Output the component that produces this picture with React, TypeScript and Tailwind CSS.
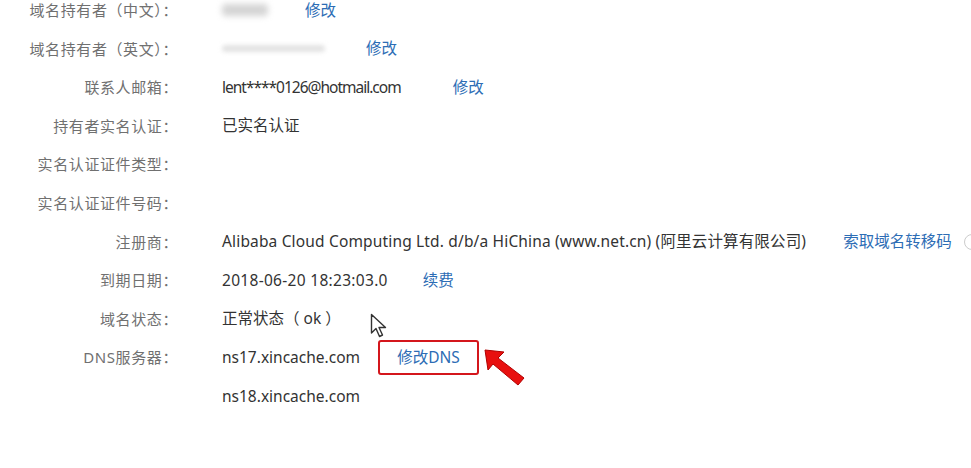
import React from "react"

const font = { fontFamily: '"Noto Sans", "Noto Sans CJK SC", sans-serif' }

function Link({ children, className = "" }: { children: React.ReactNode; className?: string }) {
  return <span className={`text-[#2d6db5] ${className}`}>{children}</span>
}

function Row({ label, children }: { label: string; children?: React.ReactNode }) {
  return (
    <div className="flex h-[38.6px] items-center">
      <div className="w-[180px] shrink-0 pr-[2px] text-right text-[15px] tracking-[0.6px] text-[#707070]">{label}</div>
      <div className="ml-[42px] flex items-center whitespace-nowrap text-[15.5px] text-[#333]">{children}</div>
    </div>
  )
}

export default function App() {
  return (
    <div className="relative h-[468px] w-[971px] overflow-hidden bg-white" style={font}>
      <div className="mt-[-9px] flex flex-col">
        <Row label="域名持有者（中文）：">
          <span className="h-[12px] w-[46px] rounded-sm bg-[#d4d4d4] blur-[3px]" />
          <Link className="ml-[37px]">修改</Link>
        </Row>
        <Row label="域名持有者（英文）：">
          <span className="h-[7px] w-[103px] rounded-sm bg-[#e3e3e3] blur-[2px]" />
          <Link className="ml-[41px]">修改</Link>
        </Row>
        <Row label="联系人邮箱：">
          <span className="tracking-[-1px]">lent****0126@hotmail.com</span>
          <Link className="ml-[52px]">修改</Link>
        </Row>
        <Row label="持有者实名认证：">
          <span>已实名认证</span>
        </Row>
        <Row label="实名认证证件类型：" />
        <Row label="实名认证证件号码：" />
        <Row label="注册商：">
          <span className="tracking-[0.16px]">Alibaba Cloud Computing Ltd. d/b/a HiChina (www.net.cn) (阿里云计算有限公司)</span>
          <Link className="ml-[37px]">索取域名转移码</Link>
          <span className="ml-[12px] h-[16px] w-[16px] shrink-0 rounded-full border border-[#ccc]" />
        </Row>
        <Row label="到期日期：">
          <span className="tracking-[0.3px]">2018-06-20 18:23:03.0</span>
          <Link className="ml-[35px]">续费</Link>
        </Row>
        <Row label="域名状态：">
          <span>正常状态（ ok ）</span>
        </Row>
        <Row label="DNS服务器：">
          <span>ns17.xincache.com</span>
          <span className="ml-[18px] flex h-[35px] w-[101px] items-center justify-center rounded-[3px] border-2 border-[#d4161c]">
            <Link>修改DNS</Link>
          </span>
        </Row>
        <Row label="">
          <span>ns18.xincache.com</span>
        </Row>
      </div>

      {/* mouse cursor */}
      <svg className="absolute left-[370px] top-[313px]" width="20" height="26" viewBox="0 0 20 26">
        <path d="M1.5 1.5 L1.5 20 L6 15.5 L9.5 23.5 L12.5 22 L9 14.5 L15.5 14.5 Z" fill="#fff" stroke="#333" strokeWidth="1.4" strokeLinejoin="round" />
      </svg>

      {/* red arrow */}
      <svg className="absolute left-[482px] top-[346px]" width="46" height="42" viewBox="0 0 46 42">
        <path d="M3 4 L22 6 L16 12 L42 32 L36 39 L11 18 L6 24 Z" fill="#e8100f" stroke="#b00000" strokeWidth="1" strokeLinejoin="round" />
      </svg>
    </div>
  )
}
